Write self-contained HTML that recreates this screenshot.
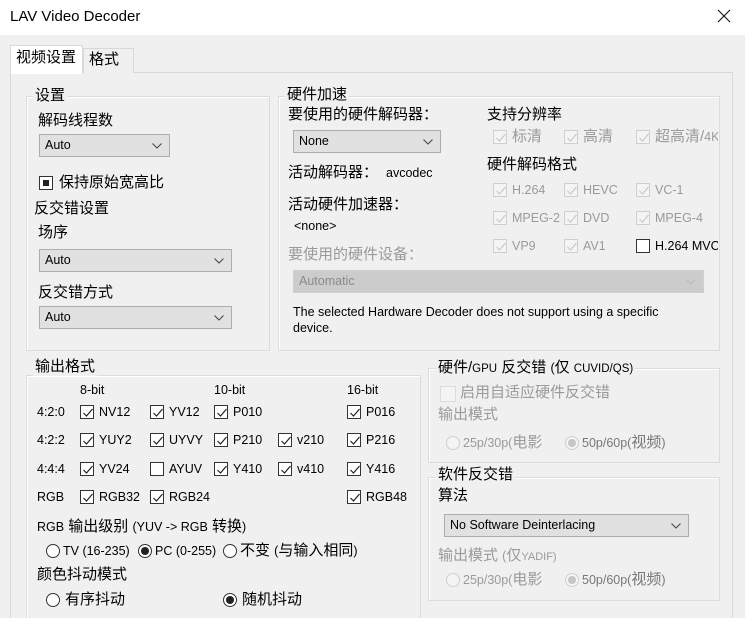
<!DOCTYPE html>
<html><head><meta charset="utf-8">
<style>
*{margin:0;padding:0;box-sizing:border-box}
html,body{width:745px;height:618px;overflow:hidden}
body{background:#f0f0f0;position:relative;font-family:"Liberation Sans","Noto Sans CJK SC",sans-serif;color:#000}
.a{position:absolute}
.t{position:absolute;white-space:nowrap;line-height:18px;font-size:15px}
.e{font-size:12.5px}
.g{color:#9a9a9a}
.grp{position:absolute;border:1px solid #dcdcdc;box-shadow:inset 1px 1px 0 #fff}
.lbl{position:absolute;background:#f0f0f0;padding:0 2px;line-height:18px;font-size:15px;white-space:nowrap}
.cb{position:absolute;width:14px;height:14px;border:1px solid #333;background:#fff}
.cb svg{position:absolute;left:0;top:0}
.cbd{position:absolute;width:14px;height:14px;border:1px solid #cfcfcf;background:#f4f4f4}
.cbd svg{position:absolute;left:0;top:0}
.cmb{position:absolute;height:23px;border:1px solid #adadad;background:#e1e1e1;font-size:12.5px;line-height:21px;padding-left:5px}
.cmb svg{position:absolute;right:7px;top:8px}
.rd{position:absolute;width:14px;height:14px;border:1px solid #333;border-radius:50%;background:#fff}
.rd.on::after{content:"";position:absolute;left:2px;top:2px;width:8px;height:8px;border-radius:50%;background:#222}
.rdd{position:absolute;width:14px;height:14px;border:1px solid #cfcfcf;border-radius:50%;background:#f4f4f4}
.rdd.on::after{content:"";position:absolute;left:2px;top:2px;width:8px;height:8px;border-radius:50%;background:#c6c6c6}
</style></head><body>
<svg width="0" height="0" style="position:absolute"><defs>
<symbol id="ck" viewBox="0 0 14 14"><path d="M2.5 7 L5.5 10 L11.5 3" fill="none" stroke="#222" stroke-width="1.2"/></symbol>
<symbol id="ckd" viewBox="0 0 14 14"><path d="M2.5 7 L5.5 10 L11.5 3" fill="none" stroke="#c8c8c8" stroke-width="1.2"/></symbol>
<symbol id="dn" viewBox="0 0 10 6"><path d="M0.5 0.5 L5 5 L9.5 0.5" fill="none" stroke="#444" stroke-width="1"/></symbol>
<symbol id="dng" viewBox="0 0 10 6"><path d="M0.5 0.5 L5 5 L9.5 0.5" fill="none" stroke="#bbb" stroke-width="1"/></symbol>
</defs></svg>

<div class="a" style="left:0;top:0;width:745px;height:35px;background:#fff"></div>
<div class="t" style="left:10px;top:7px;font-size:15px;line-height:20px">LAV Video Decoder</div>
<svg class="a" style="left:717px;top:9px" width="14" height="14"><path d="M1 1 L13 13 M13 1 L1 13" stroke="#111" stroke-width="1.1"/></svg>

<div class="a" style="left:10px;top:72px;width:723px;height:560px;border:1px solid #d9d9d9;background:#f0f0f0"></div>
<div class="a" style="left:83px;top:48px;width:51px;height:25px;border:1px solid #d9d9d9;border-bottom:none;background:#f0f0f0"></div>
<div class="t" style="left:89px;top:51px">格式</div>
<div class="a" style="left:10px;top:45px;width:73px;height:29px;border:1px solid #d9d9d9;border-bottom:none;background:#fff"></div>
<div class="t" style="left:16px;top:49px">视频设置</div>

<div class="grp" style="left:26px;top:96px;width:244px;height:255px"></div>
<div class="lbl" style="left:33px;top:87px">设置</div>
<div class="t" style="left:38px;top:112px">解码线程数</div>
<div class="cmb" style="left:39px;top:134px;width:131px">Auto<svg width="10" height="6"><use href="#dn"/></svg></div>
<div class="cb" style="left:39px;top:176px"><div class="a" style="left:3px;top:3px;width:6px;height:6px;background:#222"></div></div>
<div class="t" style="left:59px;top:174px">保持原始宽高比</div>
<div class="t" style="left:34px;top:200px">反交错设置</div>
<div class="t" style="left:38px;top:224px">场序</div>
<div class="cmb" style="left:39px;top:249px;width:193px">Auto<svg width="10" height="6"><use href="#dn"/></svg></div>
<div class="t" style="left:38px;top:284px">反交错方式</div>
<div class="cmb" style="left:39px;top:306px;width:193px">Auto<svg width="10" height="6"><use href="#dn"/></svg></div>

<div class="grp" style="left:278px;top:96px;width:442px;height:255px"></div>
<div class="lbl" style="left:285px;top:86px">硬件加速</div>
<div class="t" style="left:288px;top:106px">要使用的硬件解码器：</div>
<div class="cmb" style="left:293px;top:130px;width:148px">None<svg width="10" height="6"><use href="#dn"/></svg></div>
<div class="t" style="left:288px;top:164px">活动解码器：</div>
<div class="t e" style="left:386px;top:164px">avcodec</div>
<div class="t" style="left:288px;top:196px">活动硬件加速器：</div>
<div class="t e" style="left:294px;top:217px">&lt;none&gt;</div>
<div class="t g" style="left:288px;top:246px">要使用的硬件设备：</div>
<div class="cmb" style="left:293px;top:270px;width:411px;border-color:#cfcfcf;background:#cccccc;color:#8a8a8a">Automatic<svg width="10" height="6"><use href="#dng"/></svg></div>
<div class="t e" style="left:293px;top:303px">The selected Hardware Decoder does not support using a specific</div>
<div class="t e" style="left:293px;top:319px">device.</div>

<div class="t" style="left:487px;top:106px">支持分辨率</div>
<div class="cbd" style="left:493px;top:130px"><svg width="14" height="14"><use href="#ckd"/></svg></div><div class="t g" style="left:512px;top:128px">标清</div>
<div class="cbd" style="left:564px;top:130px"><svg width="14" height="14"><use href="#ckd"/></svg></div><div class="t g" style="left:583px;top:128px">高清</div>
<div class="cbd" style="left:636px;top:130px"><svg width="14" height="14"><use href="#ckd"/></svg></div><div class="t g" style="left:655px;top:128px;width:63px;overflow:hidden">超高清/<span class="e">4K</span></div>
<div class="t" style="left:487px;top:156px">硬件解码格式</div>
<div class="cbd" style="left:493px;top:183px"><svg width="14" height="14"><use href="#ckd"/></svg></div><div class="t e g" style="left:512px;top:181px">H.264</div>
<div class="cbd" style="left:564px;top:183px"><svg width="14" height="14"><use href="#ckd"/></svg></div><div class="t e g" style="left:583px;top:181px">HEVC</div>
<div class="cbd" style="left:636px;top:183px"><svg width="14" height="14"><use href="#ckd"/></svg></div><div class="t e g" style="left:655px;top:181px">VC-1</div>
<div class="cbd" style="left:493px;top:211px"><svg width="14" height="14"><use href="#ckd"/></svg></div><div class="t e g" style="left:512px;top:209px">MPEG-2</div>
<div class="cbd" style="left:564px;top:211px"><svg width="14" height="14"><use href="#ckd"/></svg></div><div class="t e g" style="left:583px;top:209px">DVD</div>
<div class="cbd" style="left:636px;top:211px"><svg width="14" height="14"><use href="#ckd"/></svg></div><div class="t e g" style="left:655px;top:209px">MPEG-4</div>
<div class="cbd" style="left:493px;top:239px"><svg width="14" height="14"><use href="#ckd"/></svg></div><div class="t e g" style="left:512px;top:237px">VP9</div>
<div class="cbd" style="left:564px;top:239px"><svg width="14" height="14"><use href="#ckd"/></svg></div><div class="t e g" style="left:583px;top:237px">AV1</div>
<div class="cb" style="left:636px;top:239px"></div><div class="t e" style="left:655px;top:237px;width:63px;overflow:hidden">H.264 MVC</div>

<div class="grp" style="left:26px;top:375px;width:395px;height:260px"></div>
<div class="lbl" style="left:33px;top:358px">输出格式</div>
<div class="t e" style="left:80px;top:381px">8-bit</div>
<div class="t e" style="left:214px;top:381px">10-bit</div>
<div class="t e" style="left:347px;top:381px">16-bit</div>
<div class="t e" style="left:37px;top:403px">4:2:0</div>
<div class="t e" style="left:37px;top:431px">4:2:2</div>
<div class="t e" style="left:37px;top:460px">4:4:4</div>
<div class="t e" style="left:37px;top:488px">RGB</div>

<div class="cb" style="left:80px;top:405px"><svg width="14" height="14"><use href="#ck"/></svg></div><div class="t e" style="left:99px;top:403px">NV12</div>
<div class="cb" style="left:150px;top:405px"><svg width="14" height="14"><use href="#ck"/></svg></div><div class="t e" style="left:169px;top:403px">YV12</div>
<div class="cb" style="left:214px;top:405px"><svg width="14" height="14"><use href="#ck"/></svg></div><div class="t e" style="left:233px;top:403px">P010</div>
<div class="cb" style="left:347px;top:405px"><svg width="14" height="14"><use href="#ck"/></svg></div><div class="t e" style="left:366px;top:403px">P016</div>

<div class="cb" style="left:80px;top:433px"><svg width="14" height="14"><use href="#ck"/></svg></div><div class="t e" style="left:99px;top:431px">YUY2</div>
<div class="cb" style="left:150px;top:433px"><svg width="14" height="14"><use href="#ck"/></svg></div><div class="t e" style="left:169px;top:431px">UYVY</div>
<div class="cb" style="left:214px;top:433px"><svg width="14" height="14"><use href="#ck"/></svg></div><div class="t e" style="left:233px;top:431px">P210</div>
<div class="cb" style="left:278px;top:433px"><svg width="14" height="14"><use href="#ck"/></svg></div><div class="t e" style="left:297px;top:431px">v210</div>
<div class="cb" style="left:347px;top:433px"><svg width="14" height="14"><use href="#ck"/></svg></div><div class="t e" style="left:366px;top:431px">P216</div>

<div class="cb" style="left:80px;top:462px"><svg width="14" height="14"><use href="#ck"/></svg></div><div class="t e" style="left:99px;top:460px">YV24</div>
<div class="cb" style="left:150px;top:462px"></div><div class="t e" style="left:169px;top:460px">AYUV</div>
<div class="cb" style="left:214px;top:462px"><svg width="14" height="14"><use href="#ck"/></svg></div><div class="t e" style="left:233px;top:460px">Y410</div>
<div class="cb" style="left:278px;top:462px"><svg width="14" height="14"><use href="#ck"/></svg></div><div class="t e" style="left:297px;top:460px">v410</div>
<div class="cb" style="left:347px;top:462px"><svg width="14" height="14"><use href="#ck"/></svg></div><div class="t e" style="left:366px;top:460px">Y416</div>

<div class="cb" style="left:80px;top:490px"><svg width="14" height="14"><use href="#ck"/></svg></div><div class="t e" style="left:99px;top:488px">RGB32</div>
<div class="cb" style="left:150px;top:490px"><svg width="14" height="14"><use href="#ck"/></svg></div><div class="t e" style="left:169px;top:488px">RGB24</div>
<div class="cb" style="left:347px;top:490px"><svg width="14" height="14"><use href="#ck"/></svg></div><div class="t e" style="left:366px;top:488px">RGB48</div>

<div class="t" style="left:37px;top:518px"><span class="e">RGB</span> 输出级别 <span class="e">(YUV -&gt; RGB</span> 转换<span class="e">)</span></div>
<div class="rd" style="left:46px;top:544px"></div><div class="t e" style="left:63px;top:542px">TV (16-235)</div>
<div class="rd on" style="left:138px;top:544px"></div><div class="t e" style="left:155px;top:542px">PC (0-255)</div>
<div class="rd" style="left:223px;top:544px"></div><div class="t" style="left:240px;top:542px">不变 <span class="e">(</span>与输入相同<span class="e">)</span></div>
<div class="t" style="left:37px;top:566px">颜色抖动模式</div>
<div class="rd" style="left:46px;top:593px"></div><div class="t" style="left:65px;top:591px">有序抖动</div>
<div class="rd on" style="left:223px;top:593px"></div><div class="t" style="left:242px;top:591px">随机抖动</div>

<div class="grp" style="left:428px;top:368px;width:292px;height:95px"></div>
<div class="lbl" style="left:436px;top:359px">硬件/<span style="font-size:11.5px">GPU</span> 反交错 <span class="e">(</span>仅 <span style="font-size:11.5px">CUVID/QS)</span></div>
<div class="cbd" style="left:440px;top:386px;width:16px;height:16px;border-color:#dcdcdc"></div>
<div class="t g" style="left:460px;top:384px">启用自适应硬件反交错</div>
<div class="t g" style="left:438px;top:406px">输出模式</div>
<div class="rdd" style="left:446px;top:436px"></div><div class="t g" style="left:463px;top:434px"><span class="e">25p/30p(</span>电影</div>
<div class="rdd on" style="left:565px;top:436px"></div><div class="t" style="left:582px;top:434px;color:#777"><span class="e">50p/60p(</span>视频<span class="e">)</span></div>

<div class="grp" style="left:428px;top:477px;width:292px;height:124px"></div>
<div class="lbl" style="left:436px;top:466px">软件反交错</div>
<div class="t" style="left:438px;top:487px">算法</div>
<div class="cmb" style="left:444px;top:514px;width:245px">No Software Deinterlacing<svg width="10" height="6"><use href="#dn"/></svg></div>
<div class="t g" style="left:438px;top:547px">输出模式 <span class="e">(</span>仅<span style="font-size:11px">YADIF)</span></div>
<div class="rdd" style="left:446px;top:573px"></div><div class="t g" style="left:463px;top:571px"><span class="e">25p/30p(</span>电影</div>
<div class="rdd on" style="left:565px;top:573px"></div><div class="t" style="left:582px;top:571px;color:#777"><span class="e">50p/60p(</span>视频<span class="e">)</span></div>
</body></html>
